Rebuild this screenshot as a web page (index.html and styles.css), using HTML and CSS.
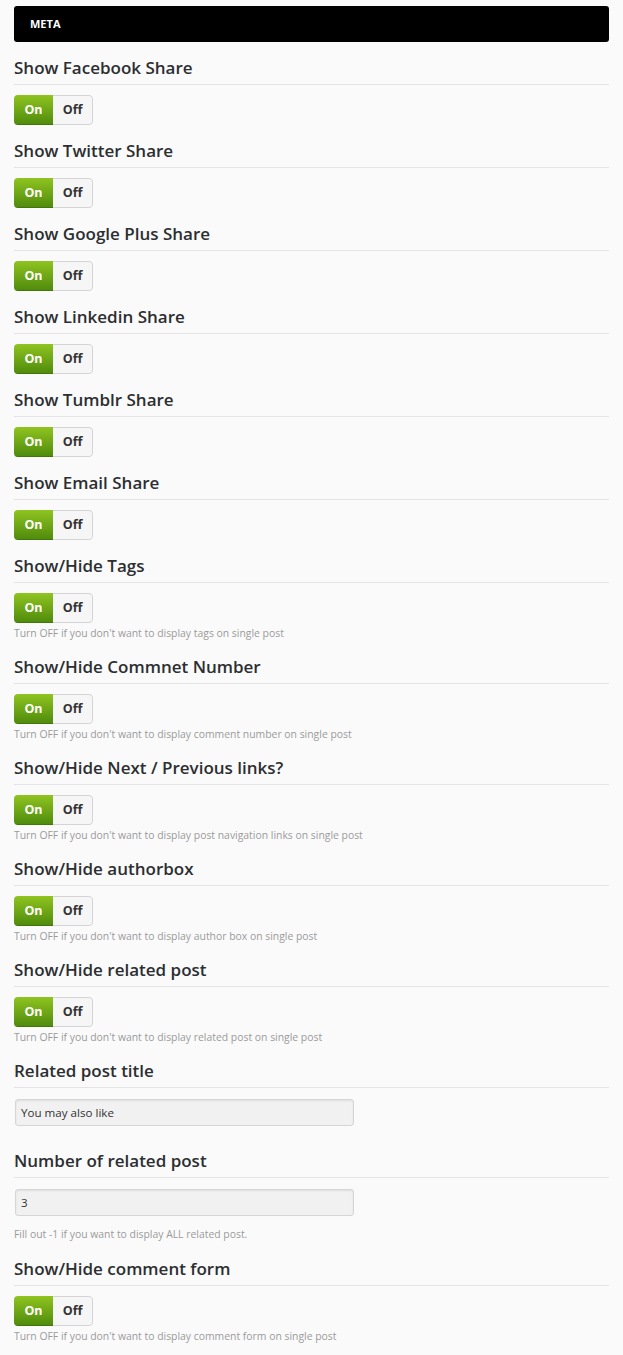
FILE: index.html
```html
<!DOCTYPE html>
<html>
<head>
<meta charset="utf-8">
<link rel="stylesheet" href="styles.css">
</head>
<body>
<div class="panel">
  <div class="header">META</div>

  <div class="field">
    <div class="title">Show Facebook Share</div>
    <div class="toggle"><span class="on">On</span><span class="off">Off</span></div>
  </div>
  <div class="field">
    <div class="title">Show Twitter Share</div>
    <div class="toggle"><span class="on">On</span><span class="off">Off</span></div>
  </div>
  <div class="field">
    <div class="title">Show Google Plus Share</div>
    <div class="toggle"><span class="on">On</span><span class="off">Off</span></div>
  </div>
  <div class="field">
    <div class="title">Show Linkedin Share</div>
    <div class="toggle"><span class="on">On</span><span class="off">Off</span></div>
  </div>
  <div class="field">
    <div class="title">Show Tumblr Share</div>
    <div class="toggle"><span class="on">On</span><span class="off">Off</span></div>
  </div>
  <div class="field">
    <div class="title">Show Email Share</div>
    <div class="toggle"><span class="on">On</span><span class="off">Off</span></div>
  </div>
  <div class="field">
    <div class="title">Show/Hide Tags</div>
    <div class="toggle"><span class="on">On</span><span class="off">Off</span></div>
    <div class="desc">Turn OFF if you don't want to display tags on single post</div>
  </div>
  <div class="field">
    <div class="title">Show/Hide Commnet Number</div>
    <div class="toggle"><span class="on">On</span><span class="off">Off</span></div>
    <div class="desc">Turn OFF if you don't want to display comment number on single post</div>
  </div>
  <div class="field">
    <div class="title">Show/Hide Next / Previous links?</div>
    <div class="toggle"><span class="on">On</span><span class="off">Off</span></div>
    <div class="desc">Turn OFF if you don't want to display post navigation links on single post</div>
  </div>
  <div class="field">
    <div class="title">Show/Hide authorbox</div>
    <div class="toggle"><span class="on">On</span><span class="off">Off</span></div>
    <div class="desc">Turn OFF if you don't want to display author box on single post</div>
  </div>
  <div class="field">
    <div class="title">Show/Hide related post</div>
    <div class="toggle"><span class="on">On</span><span class="off">Off</span></div>
    <div class="desc">Turn OFF if you don't want to display related post on single post</div>
  </div>
  <div class="field field-input">
    <div class="title">Related post title</div>
    <div class="input">You may also like</div>
  </div>
  <div class="field field-input">
    <div class="title">Number of related post</div>
    <div class="input">3</div>
    <div class="desc desc-input">Fill out -1 if you want to display ALL related post.</div>
  </div>
  <div class="field">
    <div class="title">Show/Hide comment form</div>
    <div class="toggle"><span class="on">On</span><span class="off">Off</span></div>
    <div class="desc">Turn OFF if you don't want to display comment form on single post</div>
  </div>
</div>
</body>
</html>
```
FILE: styles.css
```css
html, body {
  margin: 0;
  padding: 0;
  background: #fafafa;
}
body {
  font-family: "Open Sans", "Liberation Sans", sans-serif;
  color: #222;
}
.panel {
  width: 595px;
  margin: 6px 0 0 14px;
}
.header {
  background: #000;
  color: #fff;
  height: 36px;
  border-radius: 3px;
  font-size: 11px;
  font-weight: 700;
  line-height: 36px;
  padding-left: 16px;
}
.field {
  padding-top: 14px;
}
.title {
  font-size: 17px;
  font-weight: 600;
  line-height: 24px;
  color: #2c2e31;
  padding-bottom: 4px;
  border-bottom: 1px solid #e4e4e4;
}
.toggle {
  display: flex;
  width: 79px;
  height: 30px;
  margin-top: 10px;
  border-radius: 4px;
  overflow: hidden;
  font-size: 12.5px;
  font-weight: 700;
  line-height: 30px;
}
.toggle .on {
  width: 39px;
  text-align: center;
  color: #fff;
  background: linear-gradient(#8fc420, #4e8a0c);
  box-shadow: inset 0 -1px 0 rgba(0,0,0,0.15);
}
.toggle .off {
  flex: 1;
  text-align: center;
  color: #333;
  background: #f6f6f6;
  border: 1px solid #d4d4d4;
  border-left: none;
  border-radius: 0 4px 4px 0;
  line-height: 28px;
}
.desc {
  margin-top: 2px;
  font-size: 10.4px;
  line-height: 16px;
  color: #9a9a9a;
}
.input {
  width: 332px;
  height: 25px;
  margin: 11px 0 0 1px;
  padding-left: 5px;
  background: #f1f1f1;
  border: 1px solid #d6d6d6;
  border-radius: 3px;
  box-shadow: inset 0 1px 2px rgba(0,0,0,0.08);
  font-size: 11.6px;
  line-height: 25px;
  color: #333;
}
.field-input {
  padding-bottom: 9px;
}
.desc-input {
  margin-top: 10px;
  margin-bottom: 1px;
}
.field-input + .field-input {
  padding-top: 14px;
  padding-bottom: 0;
}
```
